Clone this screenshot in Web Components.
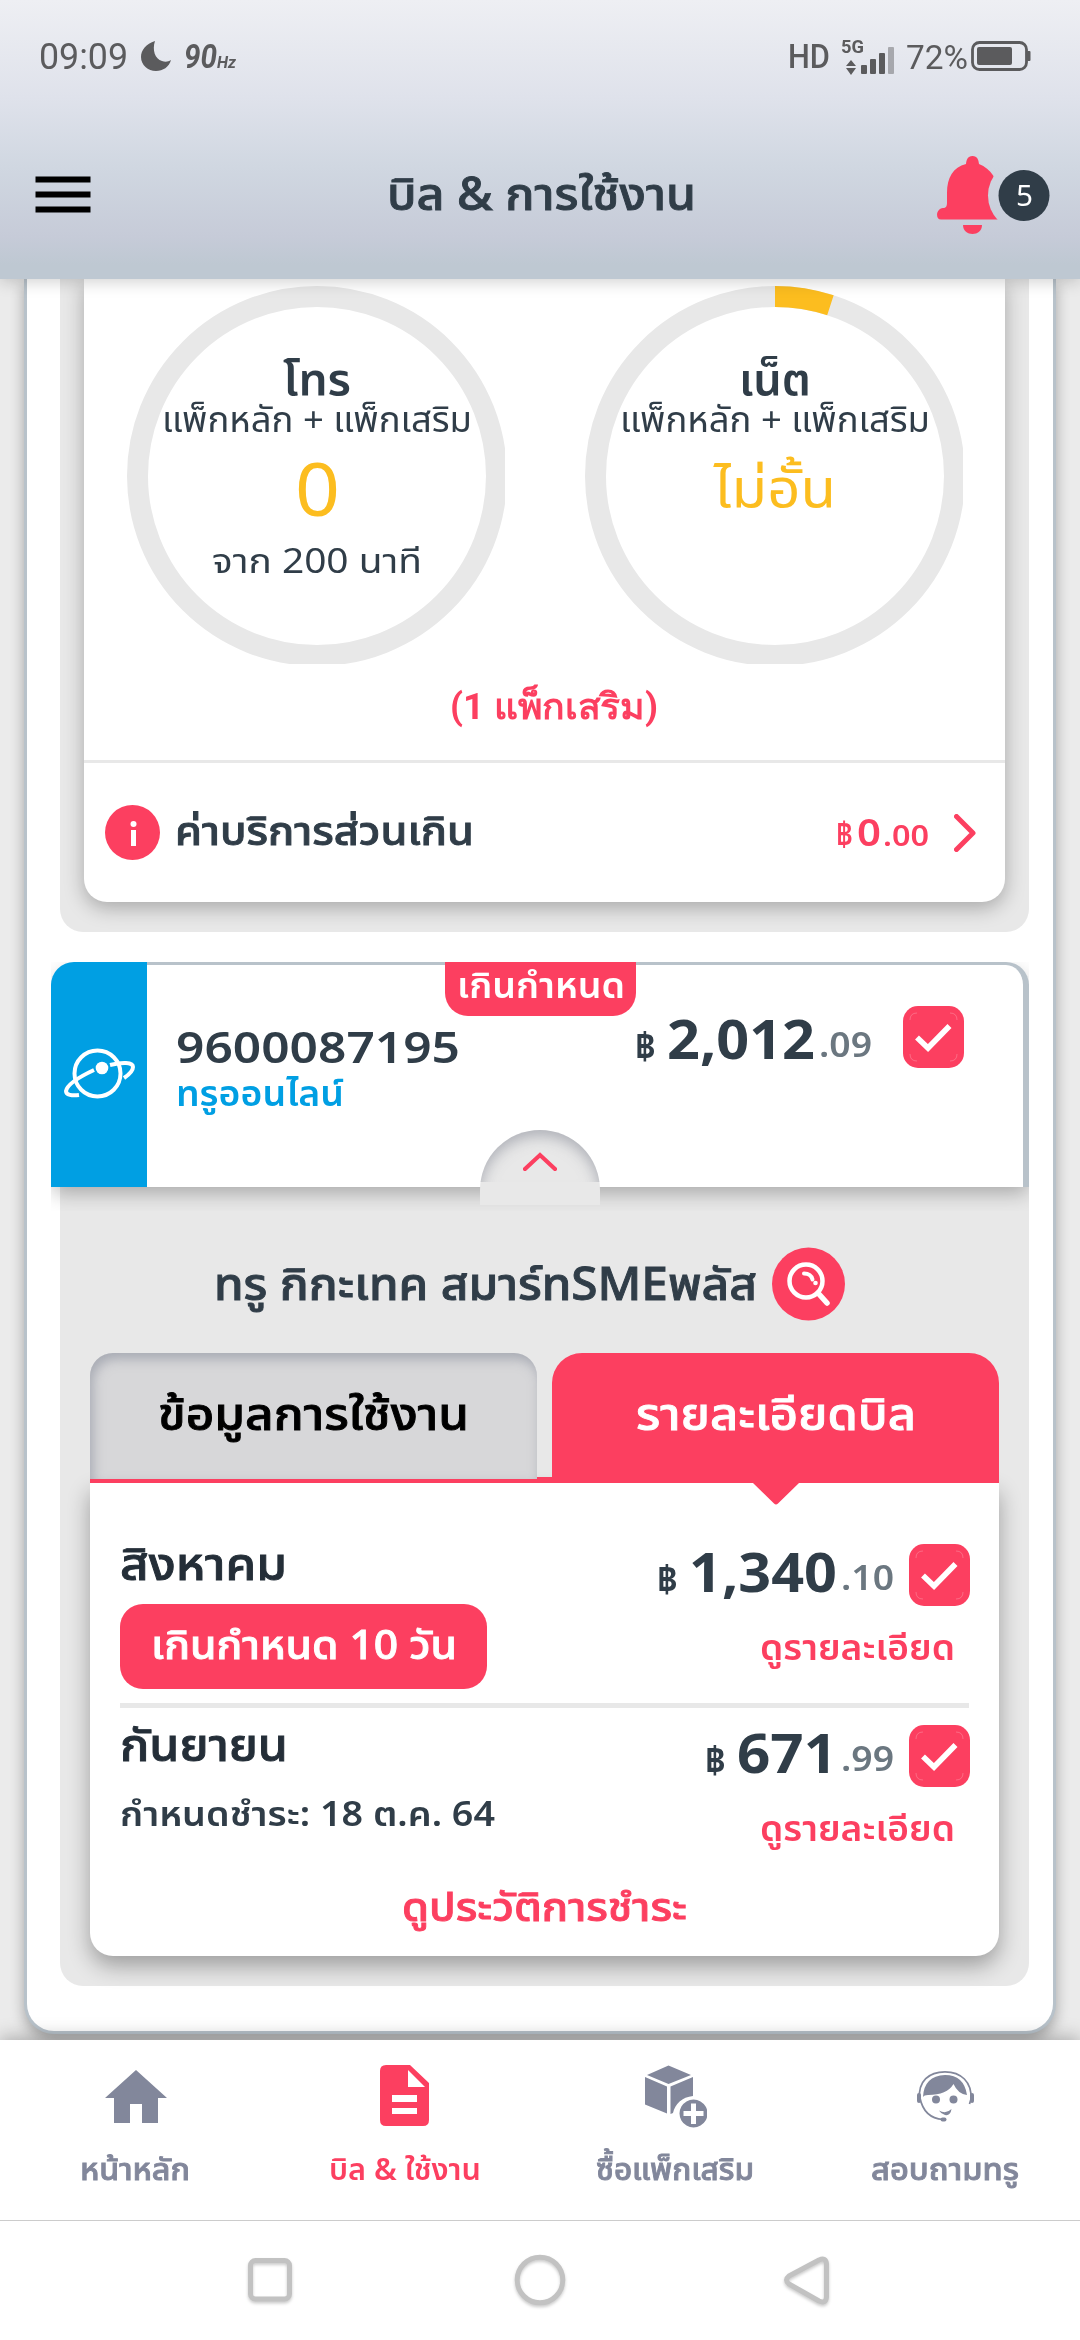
<!doctype html>
<html lang="th">
    <head>
        <meta charset="utf-8">
        <title>บิล &amp; การใช้งาน</title>
        <meta name="viewport" content="width=device-width, initial-scale=1">
        <style>
          body {
            margin: 0;
            --pink: #fc3f60;
            --ink: #303d48;
            --panel: #e8e8e8;
            --line: #b8c2ca;
            --f: "Noto Sans", "Noto Sans Thai", "Open Sans", sans-serif;
            color: var(--ink);
            font-family: var(--f);
          }
          .medium { -webkit-text-stroke: .9px currentColor; }
        </style>
    </head>
    <body>

      <template id="screen-template">
        <style>
          :host {
            display: flex;
            flex-direction: column;
            width: 1080px;
            height: 2340px;
            overflow: hidden;
            background: #fff;
          }
          .top {
            height: 279px;
            background: linear-gradient(#eeeff3, #dfe2eb 35%, #d0d7e1 60%, #c6cbd8 85%, #bec8d2 95%);
            box-shadow: 0 2px 16px rgba(0,0,0,.2);
            position: relative;
            z-index: 2;
          }
          main {
            height: 1761px;
            background: #ebebeb;
            padding: 0 24px;
            box-sizing: border-box;
          }
          .sheet {
            height: 1755px;
            box-sizing: border-box;
            border: 3px solid var(--line);
            border-top: 0;
            border-radius: 0 0 30px 30px;
            background: #fff;
            box-shadow: 0 6px 14px rgba(0,0,0,.3);
          }
        </style>
        <div class="top"><slot name="top"></slot></div>
        <main><div class="sheet"><slot></slot></div></main>
        <slot name="bottom"></slot>
      </template>

      <template id="status-template">
        <style>
          :host {
            display: flex;
            align-items: center;
            height: 112px;
            padding: 0 49px 0 39px;
            box-sizing: border-box;
            font-family: Roboto, sans-serif;
            color: #5b5b5d;
          }
          .grow { flex: 1; }
          .signal { display: grid; margin: -1px 0 0 11px; width: 56px; height: 38px; }
          .signal > * { grid-area: 1 / 1; }
          svg { display: block; }
        </style>
        <fit-text w="89" style="font-size:36px;margin-top:2px">09:09</fit-text>
        <svg width="30" height="30" viewBox="0 0 30 30" style="margin-left:13px"><path d="M14 0C5 3 0 9 0 16c0 8 7 14 15 14 7 0 13-4 15-11-3 2-6 2-9 1-7-2-10-11-7-20z" fill="#5b5b5d"/></svg>
        <fit-text w="33" style="font:italic 700 33px Roboto;margin-left:13px">90</fit-text>
        <fit-text w="19" style="font:italic 700 17px Roboto;margin-top:12px">Hz</fit-text>
        <span class="grow"></span>
        <fit-text w="42" style="font:500 34px Roboto">HD</fit-text>
        <div class="signal">
          <fit-text w="23" style="font:700 19px/20px Roboto">5G</fit-text>
          <svg width="56" height="38" viewBox="0 0 56 38" fill="#5b5b5d">
            <path d="M5 29l5-6 5 6zM5 31l5 7 5-7z"/>
            <rect x="20" y="28" width="6" height="9" rx="1"/><rect x="29" y="22" width="6" height="15" rx="1"/><rect x="38" y="16" width="6" height="21" rx="1"/><rect x="47" y="10" width="6" height="27" rx="1" opacity=".45"/>
          </svg>
        </div>
        <fit-text w="62" style="font-size:34px;margin-left:9px;margin-top:2px">72%</fit-text>
        <svg width="60" height="30" viewBox="0 0 60 30" style="margin-left:3px;margin-top:-1px"><rect x="1.500" y="1.500" width="54" height="27" rx="7" fill="none" stroke="#5b5b5d" stroke-width="2.800"/><rect x="6" y="6" width="35" height="18" rx="2" fill="#5b5b5d"/><rect x="56" y="10" width="3.500" height="10" rx="1" fill="#5b5b5d"/></svg>
      </template>

      <template id="header-template">
        <style>
          :host {
            display: grid;
            grid-template-columns: 200px 1fr 200px;
            align-items: center;
            height: 167px;
          }
          .title { justify-self: center; font: 500 45px/80px var(--f); margin: -6px 0 0 2px; }
          svg { display: block; }
          .menu { margin: -2px 0 0 35px; }
          .bell { margin-left: 57px; }
          .alert { display: grid; }
          .alert > * { grid-area: 1 / 1; }
          .count { color: #fff; font: 400 29px/40px var(--f); margin: 19px 0 0 136px; z-index: 1; }
        </style>
        <svg class="menu" width="56" height="37" viewBox="0 0 56 37"><path d="M.5 3.500h55M.5 18.500h55M.5 33.500h55" stroke="#000" stroke-width="6"/></svg>
        <div class="title"><slot></slot></div>
        <div class="alert">
          <svg class="bell" width="116" height="80" viewBox="0 0 116 80">
            <mask id="cut"><rect width="116" height="80" fill="#fff"/><circle cx="87" cy="39.500" r="36" fill="#000"/></mask>
            <path mask="url(#cut)" fill="#fc3f60" d="M35.500 0c5 0 6 4 6.500 8 12 5 19 15 19 29 0 12 2 19 10 22v4.500H4c-6 0-5-11 2-11.500 3 0 4-2 4-5V37C10 22 16 11 29 8c.5-4 1.500-8 6.500-8z"/>
            <path fill="#fc3f60" d="M26 69h19c0 12-19 12-19 0z"/>
            <circle cx="87" cy="39.500" r="25.500" fill="#303d48"/>
          </svg>
          <fit-text class="count" w="17">5</fit-text>
        </div>
      </template>

      <template id="ring-template">
        <style>
          :host { display: grid; width: 378px; height: 378px; }
          svg, .text { grid-area: 1 / 1; }
          .text {
            display: flex;
            flex-direction: column;
            align-items: center;
            padding: 67px 0 0 2px;
            width: 378px;
            box-sizing: border-box;
            z-index: 1;
          }
        </style>
        <svg width="378" height="378">
          <circle cx="190" cy="190" r="179.500" fill="none" stroke="#e8e8e8" stroke-width="21"/>
          <circle class="used" cx="190" cy="190" r="179.500" fill="none" stroke="#fcbd1f" stroke-width="21" pathLength="100" transform="rotate(-90 190 190)"/>
        </svg>
        <div class="text"><slot></slot></div>
      </template>

      <template id="usage-template">
        <style>
          :host {
            display: block;
            margin: 0 24px 0 33px;
            height: 653px;
            padding: 0 24px;
            box-sizing: border-box;
            background: var(--panel);
            border-radius: 0 0 23px 23px;
          }
          .card {
            height: 623px;
            background: #fff;
            border-radius: 0 0 23px 23px;
            box-shadow: 0 6px 20px rgba(0,0,0,.28);
          }
          .rings { display: flex; gap: 80px; padding: 7px 0 0 43px; }
          .extra { display: flex; justify-content: center; height: 96px; padding: 23px 0 0 18px; box-sizing: border-box; }
          .over {
            display: flex;
            align-items: center;
            height: 139px;
            border-top: 3px solid var(--panel);
            padding: 0 29px 0 21px;
          }
          .over svg { display: block; }
        </style>
        <div class="card">
          <div class="rings"><slot name="ring"></slot></div>
          <div class="extra"><slot name="extra"></slot></div>
          <div class="over">
            <svg width="55" height="55" viewBox="0 0 55 55"><circle cx="27.500" cy="27.500" r="27.500" fill="#fc3f60"/><circle cx="28.500" cy="19" r="3" fill="#fff"/><path d="M28.500 25v16" stroke="#fff" stroke-width="5"/></svg>
            <slot name="label"></slot>
            <span style="flex:1"></span>
            <slot name="amount"></slot>
            <svg width="22" height="38" viewBox="0 0 22 38" style="margin-left:25px"><path d="M2.500 2.500L19 19 2.500 35.500" fill="none" stroke="#fc3f60" stroke-width="5" stroke-linecap="round" stroke-linejoin="round"/></svg>
          </div>
        </div>
      </template>

      <template id="check-template">
        <style>
          :host { display: block; width: 61px; height: 62px; }
          svg { display: block; }
        </style>
        <svg width="61" height="62" viewBox="0 0 61 62">
          <rect width="61" height="62" rx="15" fill="#fc3f60"/>
          <path d="M7 14q0-7 7-7M47 7q7 0 7 7M54 48q0 7-7 7M14 55q-7 0-7-7" fill="none" stroke="#fff" stroke-opacity=".22"/>
          <path d="M14 31.500L25 42 46.500 20" fill="none" stroke="#fff" stroke-width="5.600"/>
        </svg>
      </template>

      <template id="account-template">
        <style>
          :host {
            display: flex;
            position: relative;
            height: 225px;
            margin: 30px 24px 0;
            border-radius: 23px 23px 0 0;
            box-shadow: 0 8px 20px -2px rgba(0,0,0,.28);
            clip-path: inset(0 0 -24px 0);
          }
          .side {
            width: 96px;
            display: flex;
            justify-content: center;
            align-items: center;
            background: #009fe3;
            border-radius: 23px 0 0 0;
          }
          .body {
            flex: 1;
            display: flex;
            justify-content: space-between;
            background: #fff;
            border-top: 3px solid var(--line);
            border-right: 6px solid var(--line);
            border-radius: 0 23px 0 0;
            padding: 0 59px 0 29px;
          }
          .id { padding-top: 59px; }
          .sum { display: flex; gap: 31px; padding-top: 41px; }
          .sum ::slotted(*) { margin-top: 2px; }
          .badge {
            position: absolute;
            left: 394px;
            top: 0;
            width: 191px;
            height: 54px;
            border-radius: 0 0 23px 23px;
            background: var(--pink);
            display: flex;
            justify-content: center;
          }
          /* half-round handle over the lower edge */
          .handle {
            position: absolute;
            left: 429px;
            top: 168px;
            width: 120px;
            height: 75px;
            background: var(--panel);
            border-radius: 60px 60px 0 0;
            display: flex;
            justify-content: center;
          }
          .handle::before {
            content: "";
            position: absolute;
            inset: 0 0 15px;
            border-radius: 60px 60px 0 0;
            box-shadow: inset 0 6px 14px rgba(120,124,138,.5);
            clip-path: inset(0 0 8px 0);
          }
          .handle svg { margin-top: 22px; }
        </style>
        <div class="side">
          <svg width="72" height="54" viewBox="0 0 72 54" fill="none" stroke="#fff" stroke-width="4">
            <circle cx="34.500" cy="25.500" r="23"/>
            <circle cx="39" cy="20" r="6.300" fill="#fff" stroke="none"/>
            <path d="M31 22C16 29 4 37 3 43c0 4 6 5 13 4M47 17c12-3 23-3 23 2 0 3-3 7-9 11"/>
          </svg>
        </div>
        <div class="body">
          <div class="id"><slot name="id"></slot></div>
          <div class="sum"><slot name="amount"></slot><check-box></check-box></div>
        </div>
        <div class="badge"><slot name="badge"></slot></div>
        <div class="handle">
          <svg width="34" height="19" viewBox="0 0 34 19"><path d="M2 17L17 3l15 14" fill="none" stroke="#fc3f60" stroke-width="4.200" stroke-linecap="round"/></svg>
        </div>
      </template>

      <template id="bills-template">
        <style>
          :host {
            display: block;
            height: 799px;
            margin: 0 24px 0 33px;
            padding: 60px 30px 0;
            box-sizing: border-box;
            background: var(--panel);
            border-radius: 0 0 23px 23px;
          }
          .name { display: flex; align-items: center; gap: 15px; height: 74px; padding-left: 124px; }
          .tabs {
            display: grid;
            grid-template-columns: 447px 447px;
            gap: 15px;
            height: 130px;
            margin-top: 32px;
            background: linear-gradient(var(--pink), var(--pink)) 0 100% / 100% 6px no-repeat;
            position: relative;
          }
          .tab { display: flex; justify-content: center; padding-top: 20px; box-sizing: border-box; }
          .off {
            height: 126px;
            color: #000;
            background: #d7d7d9;
            border-radius: 23px 23px 0 0;
            box-shadow: inset 3px 6px 12px rgba(130,135,150,.55);
          }
          .on { height: 130px; color: #fff; background: var(--pink); border-radius: 30px 30px 0 0; }
          .tip { position: absolute; left: 663px; top: 130px; }
          .card {
            height: 473px;
            padding: 44px 30px 0;
            box-sizing: border-box;
            background: #fff;
            border-radius: 0 0 23px 23px;
            box-shadow: 0 10px 22px rgba(0,0,0,.32);
          }
        </style>
        <div class="name">
          <slot name="name"></slot>
          <svg width="73" height="74" viewBox="0 0 73 74"><circle cx="36.500" cy="37" r="36.500" fill="#fc3f60"/><circle cx="34" cy="34" r="16.500" fill="none" stroke="#fff" stroke-width="4.500"/><path d="M46 46l9 10" stroke="#fff" stroke-width="5.500" stroke-linecap="round"/><path d="M32 26.500q7 0 8.500 6" fill="none" stroke="#fff" stroke-width="4" stroke-linecap="round"/><circle cx="43.500" cy="36" r="2.300" fill="#fff"/></svg>
        </div>
        <div class="tabs">
          <div class="tab off"><slot name="off"></slot></div>
          <div class="tab on"><slot name="on"></slot></div>
          <svg class="tip" width="46" height="22" viewBox="0 0 46 22"><path d="M0 0h46L25 20.500q-2 2-4 0z" fill="#fc3f60"/></svg>
        </div>
        <div class="card"><slot></slot></div>
      </template>

      <template id="row-template">
        <style>
          :host { display: flex; justify-content: space-between; height: 176px; }
          :host([line]) { border-bottom: 5px solid var(--panel); }
          .left { padding-top: 6px; color: #242e38; }
          .right { padding-top: 17px; margin-right: -1px; }
          .sum { display: flex; justify-content: flex-end; gap: 15px; height: 62px; }
          .sum ::slotted(*) { margin-top: -3px; }
          .more { display: flex; justify-content: flex-end; color: var(--pink); margin: 21px 15px 0 0; }
        </style>
        <div class="left"><slot></slot></div>
        <div class="right">
          <div class="sum"><slot name="amount"></slot><check-box></check-box></div>
          <div class="more"><fit-text w="195" style="font:600 35px/40px var(--f)">ดูรายละเอียด</fit-text></div>
        </div>
      </template>

      <template id="amount-template">
        <style>
          :host { display: flex; align-items: baseline; height: 62px; font-weight: 700; line-height: 62px; }
          .sign { font-size: 37px; }
          .whole { font-size: 53px; margin: 0 4px 0 11px; }
          .dec { font-size: 34px; font-weight: 600; color: #6b7780; position: relative; top: -2px; }
          :host([small]) { color: var(--pink); font-weight: 600; }
          :host([small]) .sign { font-size: 34px; }
          :host([small]) .whole { font-size: 38px; font-weight: 600; margin: 0 2px 0 4px; }
          :host([small]) .dec { font-size: 28px; color: var(--pink); top: 0; }
        </style>
        <fit-text class="sign">฿</fit-text>
        <fit-text class="whole"></fit-text>
        <fit-text class="dec"></fit-text>
      </template>

      <template id="nav-template">
        <style>
          :host {
            display: grid;
            grid-template-columns: repeat(4, 270px);
            height: 180px;
            background: #fff;
            border-bottom: 1px solid #ccc;
            box-shadow: 0 -2px 18px rgba(0,0,0,.3);
            clip-path: inset(-30px 0 0 0);
            position: relative;
            z-index: 2;
          }
        </style>
        <slot></slot>
      </template>

      <template id="item-template">
        <style>
          :host {
            display: flex;
            flex-direction: column;
            align-items: center;
            gap: 20px;
            padding-top: 24px;
            color: #82879b;
          }
          :host([active]) { color: var(--pink); }
          svg { display: block; fill: currentColor; }
        </style>
        <svg width="64" height="64" viewBox="0 0 64 64"></svg>
        <slot></slot>
      </template>

      <template id="system-template">
        <style>
          :host { display: flex; justify-content: center; height: 119px; background: #fff; }
          svg { filter: drop-shadow(0 2px 1.500px rgba(0,0,0,.2)); }
        </style>
        <svg width="600" height="119" viewBox="240 0 600 119" fill="none" stroke="#c2c2c2" stroke-width="5" stroke-linejoin="round">
          <rect x="250.500" y="39.500" width="39" height="38.500" rx="5"/>
          <circle cx="540" cy="59" r="22.800"/>
          <path d="M819 39q7-3 7.500 4v33q-.5 7-7.500 4L789 63q-5-4 0-8z"/>
        </svg>
      </template>

      <app-screen>
        <status-bar slot="top"></status-bar>
        <app-header slot="top"><fit-text class="medium" w="309">บิล &amp; การใช้งาน</fit-text></app-header>

        <usage-panel>
          <usage-ring slot="ring" used="0">
            <fit-text w="68" style="font:600 45px/50px var(--f)">โทร</fit-text>
            <fit-text w="310" style="font:400 35px/32px var(--f)">แพ็กหลัก + แพ็กเสริม</fit-text>
            <fit-text w="45" style="font:400 73px/80px var(--f);color:#fcbd1f;margin-top:13px">0</fit-text>
            <fit-text w="210" style="font:400 34px/40px var(--f);margin-top:12px">จาก 200 นาที</fit-text>
          </usage-ring>
          <usage-ring slot="ring" used="5">
            <fit-text w="72" style="font:600 45px/50px var(--f)">เน็ต</fit-text>
            <fit-text w="310" style="font:400 35px/32px var(--f)">แพ็กหลัก + แพ็กเสริม</fit-text>
            <fit-text w="122" style="font:400 53px/80px var(--f);color:#fcbd1f;margin-top:12px">ไม่อั้น</fit-text>
          </usage-ring>
          <fit-text slot="extra" w="208" style="font:700 36px/40px Roboto,sans-serif;color:var(--pink)">(1 แพ็กเสริม)</fit-text>
          <fit-text class="medium" slot="label" w="299" style="font:500 40px/60px var(--f);margin:-5px 0 0 15px">ค่าบริการส่วนเกิน</fit-text>
          <money-amount slot="amount" small sign="17" whole="24" dec="46" value="0.00" style="margin-top:-3px"></money-amount>
        </usage-panel>

        <account-card>
          <fit-text slot="id" w="284" style="font:600 43px/46px var(--f)">9600087195</fit-text>
          <fit-text slot="id" w="168" style="font:600 35px/46px var(--f);color:#009fe3">ทรูออนไลน์</fit-text>
          <money-amount slot="amount" sign="21" whole="148" dec="53" value="2,012.09"></money-amount>
          <fit-text slot="badge" w="168" style="font:600 35px/45px var(--f);color:#fff">เกินกำหนด</fit-text>
        </account-card>

        <bill-panel>
          <fit-text class="medium" slot="name" w="543" style="font:500 45px/60px var(--f);margin-top:-3px">ทรู กิกะเทค สมาร์ทSMEพลัส</fit-text>
          <fit-text class="medium" slot="off" w="311" style="font:500 45px/80px var(--f)">ข้อมูลการใช้งาน</fit-text>
          <fit-text class="medium" slot="on" w="280" style="font:500 45px/80px var(--f)">รายละเอียดบิล</fit-text>
          <bill-row line>
            <fit-text class="medium" w="167" style="font:500 45px/60px var(--f)">สิงหาคม</fit-text>
            <over-due class="medium">เกินกำหนด 10 วัน</over-due>
            <money-amount slot="amount" sign="21" whole="148" dec="53" value="1,340.10"></money-amount>
          </bill-row>
          <bill-row>
            <fit-text class="medium" w="168" style="font:500 45px/60px var(--f)">กันยายน</fit-text>
            <fit-text w="375" style="font:600 34px/40px var(--f);margin-top:19px;color:var(--ink)">กำหนดชำระ: 18 ต.ค. 64</fit-text>
            <money-amount slot="amount" sign="21" whole="100" dec="53" value="671.99"></money-amount>
          </bill-row>
          <fit-text class="medium" w="285" style="font:500 40px/40px var(--f);margin:2px auto;color:var(--pink)">ดูประวัติการชำระ</fit-text>
        </bill-panel>

        <bottom-nav slot="bottom">
          <nav-item icon="home"><fit-text class="medium" w="110" style="font:500 31px/40px var(--f)">หน้าหลัก</fit-text></nav-item>
          <nav-item icon="bill" active><fit-text w="152" style="font:600 31px/40px var(--f)">บิล &amp; ใช้งาน</fit-text></nav-item>
          <nav-item icon="pack"><fit-text class="medium" w="158" style="font:500 31px/40px var(--f)">ซื้อแพ็กเสริม</fit-text></nav-item>
          <nav-item icon="help"><fit-text class="medium" w="148" style="font:500 31px/40px var(--f)">สอบถามทรู</fit-text></nav-item>
        </bottom-nav>
        <system-nav slot="bottom"></system-nav>
      </app-screen>

      <script type="text/javascript">
        function stamp(el, id) {
          var root = el.attachShadow({mode: 'open'});
          root.appendChild(document.querySelector(id).content.cloneNode(true));
          return root;
        }

        // one line of text, stretched to the width in its w attribute
        customElements.define('fit-text', class extends HTMLElement {
          constructor() {
            super();
            this.attachShadow({mode: 'open'}).innerHTML =
              '<style>:host { display: block; white-space: nowrap; }' +
              'span { display: inline-block; transform-origin: 0 0; }</style><span><slot></slot></span>';
          }
          fit() {
            var w = parseFloat(this.getAttribute('w'));
            var span = this.shadowRoot.querySelector('span');
            if (!w || !span.offsetWidth) return;
            this.style.width = w + 'px';
            span.style.transform = 'scaleX(' + w / span.getBoundingClientRect().width + ')';
          }
        });

        ['app-screen:screen', 'status-bar:status', 'app-header:header', 'usage-panel:usage',
         'check-box:check', 'account-card:account', 'bill-panel:bills', 'bill-row:row',
         'bottom-nav:nav', 'system-nav:system'].forEach(function (pair) {
          var parts = pair.split(':');
          customElements.define(parts[0], class extends HTMLElement {
            constructor() {
              super();
              stamp(this, '#' + parts[1] + '-template');
            }
          });
        });

        customElements.define('usage-ring', class extends HTMLElement {
          constructor() {
            super();
            var used = this.getAttribute('used');
            var arc = stamp(this, '#ring-template').querySelector('.used');
            if (used === '0') arc.remove();
            else arc.setAttribute('stroke-dasharray', used + ' 100');
          }
        });

        customElements.define('money-amount', class extends HTMLElement {
          constructor() {
            super();
            var root = stamp(this, '#amount-template');
            var value = this.getAttribute('value').split('.');
            root.querySelector('.whole').textContent = value[0];
            root.querySelector('.dec').textContent = '.' + value[1];
            ['sign', 'whole', 'dec'].forEach(function (name) {
              root.querySelector('.' + name).setAttribute('w', this.getAttribute(name));
            }, this);
          }
        });

        customElements.define('over-due', class extends HTMLElement {
          constructor() {
            super();
            this.attachShadow({mode: 'open'}).innerHTML =
              '<style>:host { display: flex; justify-content: center; width: 367px; height: 85px;' +
              'margin-top: 11px; background: var(--pink); color: #fff; border-radius: 23px;' +
              'font: 500 40px/80px var(--f); }</style><fit-text w="306"><slot></slot></fit-text>';
          }
        });

        var icons = {
          home: '<path d="M33 6l31 28h-9v25H39V40H27v19H11V34H2z"/>',
          bill: '<path fill-rule="evenodd" d="M13 1h24l19 18v37q0 6-6 6H13q-6 0-6-6V7q0-6 6-6zm22 5v17h17zM19 31v7h25v-7zm0 13v6h25v-6z"/>',
          pack: '<path d="M25.500 1.500L48 11 25.500 20 4 11zM2 13l22 9.500v27L2 40.500zM50 13v19c-11 1-18 8-20 17l-2.500 1V22.500z"/><path fill-rule="evenodd" d="M50.500 35.500a14 14 0 1 0 .01 0zm-2.500 4h5v7.500h7.500v5H53v8h-5v-8h-7.500v-5H48z"/>',
          help: '<path d="M10 33Q11 12 32 11 51 11 54 31q-9-1-13.500-11Q34 31 15 31 11 31 10 33z"/><circle cx="23" cy="35.500" r="4"/><circle cx="40.500" cy="35.500" r="4"/><path d="M26 46.500q7 4 12.500-1.500-1 7-6.500 6-4-1-6-4.500z"/><path d="M6.500 35C5 17 16 7.800 32 7.800S59 18 58 35l-1.500 5M7 34q4 20 23 21.500" fill="none" stroke="currentColor" stroke-width="1.700"/><rect x="4" y="29" width="4" height="10" rx="2"/><rect x="57" y="29" width="4" height="10" rx="2"/><rect x="27.500" y="53.500" width="6" height="4" rx="2"/>'
        };

        customElements.define('nav-item', class extends HTMLElement {
          constructor() {
            super();
            stamp(this, '#item-template').querySelector('svg').innerHTML = icons[this.getAttribute('icon')];
          }
        });

        function fitAll(root) {
          root.querySelectorAll('*').forEach(function (el) {
            if (el.fit) el.fit();
            if (el.shadowRoot) fitAll(el.shadowRoot);
          });
        }
        fitAll(document);
      </script>
    </body>
</html>
